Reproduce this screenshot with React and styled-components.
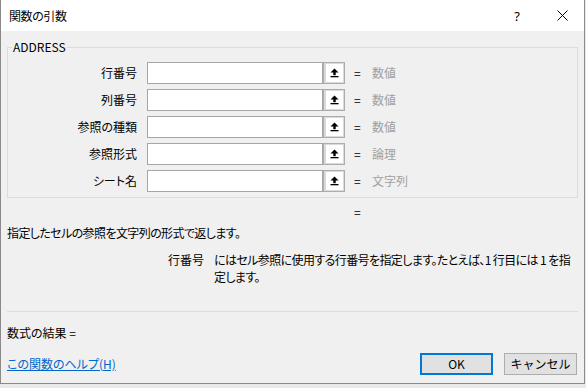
import React from "react";
import styled, { createGlobalStyle } from "styled-components";

const GlobalStyle = createGlobalStyle`
  html, body { margin: 0; padding: 0; background: #e9e9e9; }
  body {
    font-family: "Noto Sans CJK JP", "Noto Sans", sans-serif;
    font-size: 12px;
    color: #000;
    font-feature-settings: "palt";
  }
`;

const Dialog = styled.div`
  width: 585px;
  height: 384px;
  box-sizing: border-box;
  border: 1px solid #8a8a8a;
  border-top: none;
  background: #f0f0f0;
  display: flex;
  flex-direction: column;
`;

const TitleBar = styled.div`
  height: 31px;
  background: #fff;
  display: flex;
  align-items: center;
  padding-left: 8px;
  flex-shrink: 0;
`;

const Title = styled.div`
  flex: 1;
  font-size: 12px;
  line-height: 16px;
  letter-spacing: -0.4px;
`;

const CaptionButton = styled.div`
  width: ${(p) => p.$w}px;
  height: 31px;
  display: flex;
  align-items: center;
  justify-content: center;
  font-family: "Noto Sans", sans-serif;
  font-size: 13px;
`;

const Body = styled.div`
  flex: 1;
  display: flex;
  flex-direction: column;
  padding: 0 6px;
  min-width: 0;
`;

const Group = styled.fieldset`
  margin: 9px 0 0;
  padding: 8px 0 5px;
  border: 1px solid #dcdcdc;
  min-width: 0;
`;

const Legend = styled.legend`
  margin-left: 4px;
  padding: 0 1px;
  line-height: 14px;
  font-size: 12px;
`;

const Rows = styled.div`
  display: flex;
  flex-direction: column;
  gap: 5px;
`;

const Row = styled.div`
  display: flex;
  align-items: center;
  height: 22px;
`;

const Label = styled.div`
  width: 129px;
  margin-right: 10px;
  text-align: right;
  line-height: 22px;
`;

const TextBox = styled.div`
  width: 176px;
  height: 22px;
  box-sizing: border-box;
  border: 1px solid #a6a6a6;
  background: #fff;
`;

const PickButton = styled.div`
  width: 22px;
  height: 22px;
  box-sizing: border-box;
  border: 1px solid #adadad;
  background: #dadada;
  padding: 1px 1px 1px 2px;
  display: flex;
`;

const PickFace = styled.div`
  flex: 1;
  background: #fff;
  display: flex;
  align-items: center;
  justify-content: center;
`;

const Equals = styled.div`
  margin-left: 9px;
  width: 9px;
  line-height: 16px;
`;

const ValueType = styled.div`
  margin-left: 9px;
  color: #a0a0a0;
  line-height: 16px;
`;

const ResultEquals = styled.div`
  margin-top: 6px;
  padding-left: 347px;
  line-height: 16px;
`;

const Description = styled.div`
  margin-top: 5px;
  line-height: 16px;
  letter-spacing: -0.6px;
`;

const ArgHelp = styled.div`
  margin-top: 10px;
  padding-left: 161px;
  display: flex;
  gap: 10px;
  line-height: 17px;
`;

const ArgName = styled.div`
  flex-shrink: 0;
  white-space: nowrap;
`;

const ArgText = styled.div`
  white-space: nowrap;
  letter-spacing: -0.6px;
`;

const Footer = styled.div`
  margin-top: auto;
  display: flex;
  flex-direction: column;
  padding-bottom: 8px;
`;

const Separator = styled.div`
  height: 1px;
  background: #dcdcdc;
`;

const ResultLine = styled.div`
  margin-top: 13px;
  line-height: 16px;
`;

const ButtonRow = styled.div`
  margin-top: 12px;
  display: flex;
  align-items: center;
  justify-content: space-between;
  height: 22px;
`;

const HelpLink = styled.a`
  color: #0066cc;
  text-decoration: underline;
  line-height: 16px;
  cursor: pointer;
`;

const Buttons = styled.div`
  display: flex;
  gap: 11px;
  margin-right: 1px;
`;

const DialogButton = styled.button`
  width: 73px;
  height: 22px;
  box-sizing: border-box;
  border: ${(p) => (p.$default ? "2px solid #0078d7" : "1px solid #adadad")};
  background: #e1e1e1;
  font-family: inherit;
  font-size: 12px;
  color: #000;
  padding: 0;
  line-height: 16px;
`;

const UpArrow = () => (
  <svg width="9" height="10" viewBox="0 0 9 10">
    <polygon points="4.5,0.5 0.5,4.5 8.5,4.5" fill="#000" />
    <rect x="3.3" y="4" width="2.4" height="3.2" fill="#000" />
    <rect x="0.5" y="8" width="8" height="1.3" fill="#000" />
  </svg>
);

const CloseIcon = () => (
  <svg width="11" height="11" viewBox="0 0 11 11">
    <path d="M0.5 0.5 L10.5 10.5 M10.5 0.5 L0.5 10.5" stroke="#000" strokeWidth="1" />
  </svg>
);

const args = [
  { name: "行番号", type: "数値" },
  { name: "列番号", type: "数値" },
  { name: "参照の種類", type: "数値" },
  { name: "参照形式", type: "論理" },
  { name: "シート名", type: "文字列" },
];

export default function App() {
  return (
    <>
      <GlobalStyle />
      <Dialog>
        <TitleBar>
          <Title>関数の引数</Title>
          <CaptionButton $w={46}>?</CaptionButton>
          <CaptionButton $w={44}>
            <CloseIcon />
          </CaptionButton>
        </TitleBar>
        <Body>
          <Group>
            <Legend>ADDRESS</Legend>
            <Rows>
              {args.map((a) => (
                <Row key={a.name}>
                  <Label>{a.name}</Label>
                  <TextBox />
                  <PickButton>
                    <PickFace>
                      <UpArrow />
                    </PickFace>
                  </PickButton>
                  <Equals>=</Equals>
                  <ValueType>{a.type}</ValueType>
                </Row>
              ))}
            </Rows>
          </Group>
          <ResultEquals>=</ResultEquals>
          <Description>指定したセルの参照を文字列の形式で返します。</Description>
          <ArgHelp>
            <ArgName>行番号</ArgName>
            <ArgText>
              にはセル参照に使用する行番号を指定します。たとえば、1 行目には 1 を指
              <br />
              定します。
            </ArgText>
          </ArgHelp>
          <Footer>
            <Separator />
            <ResultLine>数式の結果 =</ResultLine>
            <ButtonRow>
              <HelpLink>この関数のヘルプ(H)</HelpLink>
              <Buttons>
                <DialogButton $default>OK</DialogButton>
                <DialogButton>キャンセル</DialogButton>
              </Buttons>
            </ButtonRow>
          </Footer>
        </Body>
      </Dialog>
    </>
  );
}
